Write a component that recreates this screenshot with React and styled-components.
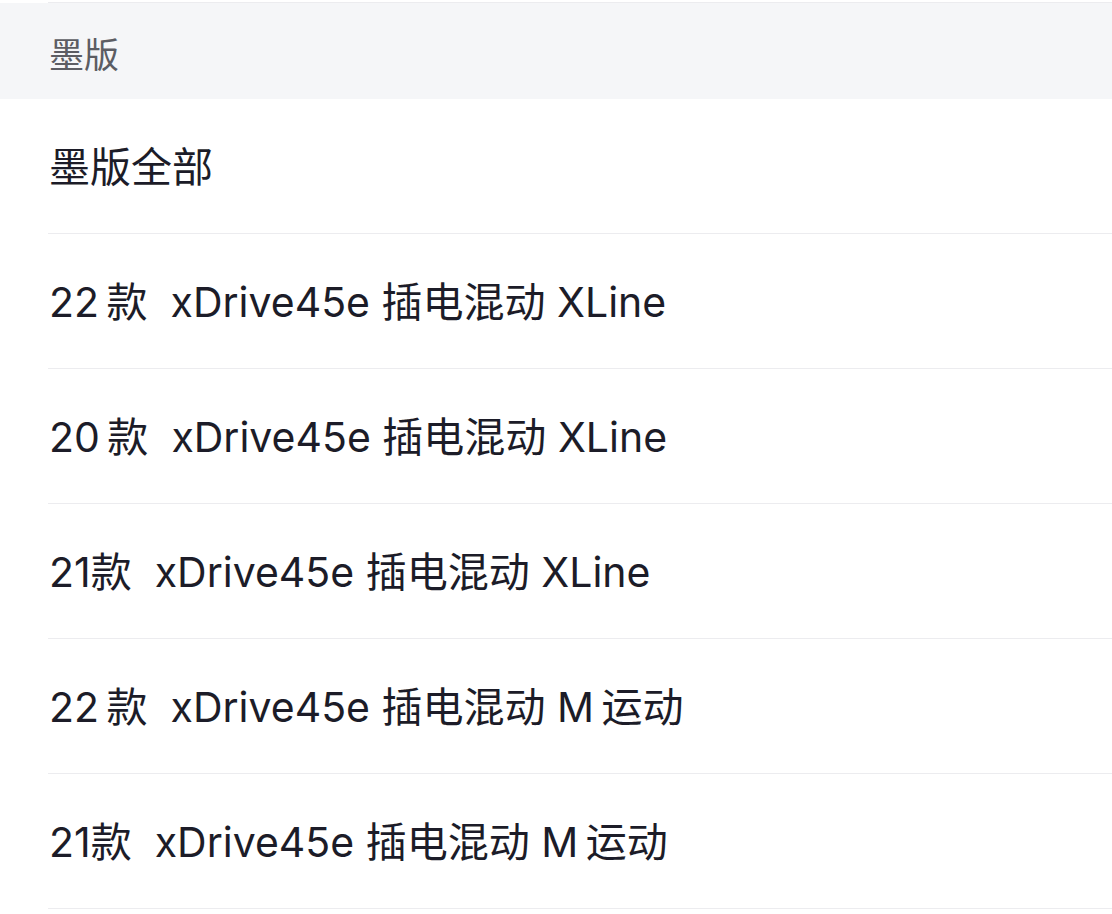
import React from 'react'
import styled, { createGlobalStyle } from 'styled-components'

const GlobalStyle = createGlobalStyle`
    body {
        margin: 0;
        background: #ffffff;
        font-family: Inter, 'Noto Sans CJK SC', 'Noto Sans', sans-serif;
    }
`
const Page = styled.div`
    width: 1112px;
    height: 914px;
    overflow: hidden;
    background: #ffffff;
`
const TopEdge = styled.div`
    height: 2px;
    margin-left: 48px;
    border-bottom: 1px solid #ececef;
`
const Header = styled.div`
    height: 96px;
    background: #f5f6f8;
    display: flex;
    align-items: center;
    padding-left: 49px;
    padding-top: 2px;
    box-sizing: border-box;
    font-size: 35px;
    color: #5c5d63;
`
const List = styled.div`
    padding-left: 48px;
`
const Row = styled.div`
    height: 134px;
    border-bottom: 1px solid #ececef;
    display: flex;
    align-items: center;
    padding-left: 1px;
    padding-bottom: 2px;
    box-sizing: content-box;
    margin-top: -2px;
    font-size: 41px;
    color: #1c1c28;
    white-space: pre;
`

const items = [
    '墨版全部',
    '22\u2009款  xDrive45e 插电混动 XLine',
    '20\u2009款  xDrive45e 插电混动 XLine',
    '21款  xDrive45e 插电混动 XLine',
    '22\u2009款  xDrive45e 插电混动 M\u2009运动',
    '21款  xDrive45e 插电混动 M\u2009运动',
]

const App = () => {
    return (
        <Page>
            <GlobalStyle />
            <TopEdge />
            <Header>墨版</Header>
            <List>
                {items.map((item) => (
                    <Row key={item}>{item}</Row>
                ))}
            </List>
        </Page>
    )
}
export default App
